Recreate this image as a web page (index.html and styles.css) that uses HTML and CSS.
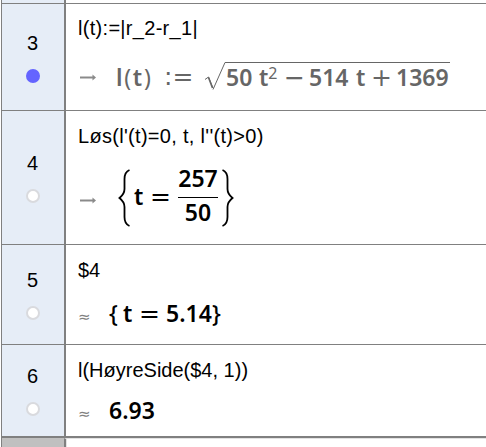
FILE: index.html
```
<!DOCTYPE html>
<html lang="no">
<head>
    <meta charset="utf-8">
    <title>CAS</title>
    <link rel="stylesheet" href="styles.css">
</head>
<body>
    <div class="cas">
        <div class="row edge">
            <div class="head"></div>
            <div class="cell"></div>
        </div>

        <div class="row row3">
            <div class="head"><span class="number">3</span><span class="dot on"></span></div>
            <div class="cell">
                <div class="input">l(t):=|r_2-r_1|</div>
                <div class="output gray">
                    <svg class="arrow" width="17" height="9" viewBox="0 0 17 9"><path d="M0 4.5H14" /><path class="tip" d="M12.5 1.5L16 4.5L12.5 7.5Z" /></svg>
                    <span class="fn">l<span class="paren">(</span>t<span class="paren">)</span></span>
                    <span class="op assign">:=</span>
                    <svg class="root" width="22" height="30" viewBox="0 0 22 30"><path class="thin" d="M1 17.5L4.5 15L9 26" /><path class="thick" d="M4.5 15.5L8.5 26" /><path class="thin" d="M9 27.5L21 .5H22" /></svg>
                    <div class="radicand">
                        <span class="num d2">50</span>
                        <span class="t">t<sup>2</sup></span>
                        <span class="op minus">−</span>
                        <span class="num d3">514</span>
                        <span class="t t-second">t</span>
                        <span class="op plus">+</span>
                        <span class="num">1369</span>
                    </div>
                </div>
            </div>
        </div>

        <div class="row row4">
            <div class="head"><span class="number">4</span><span class="dot"></span></div>
            <div class="cell">
                <div class="input">Løs(l'(t)=0, t, l''(t)&gt;0)</div>
                <div class="output">
                    <svg class="arrow" width="17" height="9" viewBox="0 0 17 9"><path d="M0 4.5H14" /><path class="tip" d="M12.5 1.5L16 4.5L12.5 7.5Z" /></svg>
                    <svg class="brace" width="13" height="58" viewBox="0 0 13 58"><path d="M11.500 1Q6.500 3 6.500 10V20Q6.500 25 1.500 29Q6.500 33 6.500 38V48Q6.500 55 11.500 57" /></svg>
                    <span class="t">t</span>
                    <span class="op equals">=</span>
                    <div class="fraction">
                        <span class="num">257</span>
                        <span class="num below">50</span>
                    </div>
                    <svg class="brace right" width="13" height="58" viewBox="0 0 13 58"><path d="M1.500 1Q6.500 3 6.500 10V20Q6.500 25 11.500 29Q6.500 33 6.500 38V48Q6.500 55 1.500 57" /></svg>
                </div>
            </div>
        </div>

        <div class="row row5">
            <div class="head"><span class="number">5</span><span class="dot"></span></div>
            <div class="cell">
                <div class="input">$4</div>
                <div class="output">
                    <span class="approx">≈</span>
                    <span class="curly">{</span>
                    <span class="t">t</span>
                    <span class="op equals">=</span>
                    <span class="num dec">5.14</span>
                    <span class="curly">}</span>
                </div>
            </div>
        </div>

        <div class="row row6">
            <div class="head"><span class="number">6</span><span class="dot"></span></div>
            <div class="cell">
                <div class="input">l(HøyreSide($4, 1))</div>
                <div class="output">
                    <span class="approx">≈</span>
                    <span class="num">6.93</span>
                </div>
            </div>
        </div>

        <div class="row footer">
            <div class="head"></div>
            <div class="cell"></div>
        </div>
    </div>
</body>
</html>
```

FILE: styles.css
```
body {
    margin: 0;
    background: #fff;
    color: #000;
    overflow: hidden;
    font-family: "Liberation Sans", Arial, sans-serif;
}
.cas {
    margin-left: 1px;
    border-left: 1px solid #808080;
    height: 447px;
    box-sizing: border-box;
}
.row {
    display: grid;
    grid-template-columns: 62px 1fr;
    box-sizing: border-box;
    border-bottom: 1px solid #808080;
}
.edge { height: 4px; }
.row3 { height: 107px; }
.row4 { height: 134px; }
.row5 { height: 100px; }
.row6 {
    height: 93px;
    border-bottom-width: 2px;
}
.footer {
    height: 9px;
    border-bottom: none;
}
.head {
    background: #e6edf7;
    display: flex;
    flex-direction: column;
    align-items: center;
    justify-content: center;
}
.number {
    font-size: 20px;
    line-height: 23px;
    margin-bottom: 14px;
    margin-right: 1px;
}
.dot {
    width: 14px;
    height: 14px;
    box-sizing: border-box;
    border: 2px solid #d9dade;
    border-radius: 50%;
    background: #fff;
}
.dot.on {
    border-color: #6464ff;
    background: #6464ff;
}
.cell {
    border-left: 2px solid #808080;
    padding-left: 12px;
}
.footer .head { background: #c0c0c0; }
.footer .cell {
    border-top: 1px solid #e3e3e3;
    box-shadow: inset 1px 0 #e3e3e3;
}
.input {
    font-size: 20px;
    line-height: 24px;
    height: 24px;
    padding-top: 13px;
    white-space: nowrap;
}
.row3 .input { letter-spacing: 0.3px; padding-top: 12px; height: 25px; }
.row4 .input { letter-spacing: 0.3px; }

/* math output */
.output {
    display: flex;
    align-items: center;
    font-family: "Noto Sans", sans-serif;
    font-size: 23px;
    font-weight: 600;
    line-height: 30px;
    white-space: nowrap;
}
.gray { color: #666; }
.output > *, .radicand > * { flex: none; }
.row3 .output { height: 30px; margin-top: 21px; }
.row4 .output { height: 60px; margin-top: 20px; }
.row5 .output { height: 30px; margin-top: 17px; }
.row6 .output { height: 30px; margin-top: 14px; }

.arrow {
    margin-left: 2px;
    fill: none;
    stroke: #8a8a8a;
    stroke-width: 2;
}
.tip {
    fill: #8a8a8a;
    stroke: none;
}
.row4 .arrow { margin-top: 5px; }
.fn {
    width: 38px;
    margin-left: 19px;
    margin-bottom: 1px;
    letter-spacing: 1.7px;
}
.num, .t { margin-bottom: 2px; }
.paren { font-weight: 400; }
.op {
    font-family: "DejaVu Sans", sans-serif;
    font-size: 25px;
    font-weight: 400;
}
.assign { width: 30px; margin-left: 10px; }
.root {
    fill: none;
    stroke: #666;
    margin-left: 10px;
}
.thin { stroke-width: 1; }
.thick { stroke-width: 1.6; }
.radicand {
    display: flex;
    align-items: center;
    box-sizing: border-box;
    width: 224px;
    height: 30px;
    border-top: 1px solid #666;
}
.t { width: 16px; }
.radicand .t { width: 25px; margin-left: 8px; }
.radicand .t-second { width: 15px; }
sup {
    font-size: 16px;
    font-weight: 400;
    line-height: 0;
    vertical-align: 7px;
}
.d2 { width: 25px; }
.minus { width: 25px; }
.d3 { width: 39px; }
.plus { width: 25px; }
.brace {
    margin-left: 21px;
    margin-right: 3px;
    fill: none;
    stroke: #000;
    stroke-width: 1.8;
}
.brace.right { margin: 0 0 0 3px; }
.equals { width: 27px; }
.row4 .t { margin-bottom: 5px; }
.row4 .equals { margin-bottom: 3px; }
.fraction {
    width: 40px;
    height: 60px;
    margin-left: 1px;
    display: flex;
    flex-direction: column;
    align-items: center;
}
.fraction .num {
    width: 40px;
    height: 29px;
    line-height: 21px;
    margin: 0;
    text-align: center;
    box-sizing: border-box;
}
.fraction .below {
    border-top: 1px solid #000;
    line-height: 28px;
}
.approx {
    width: 31px;
    margin-top: 5px;
    font-family: "DejaVu Sans", sans-serif;
    font-size: 15px;
    font-weight: 400;
    color: #808080;
}
.curly {
    width: 13px;
    font-weight: 500;
    margin-bottom: 2px;
}
.row5 .t { margin-left: 1px; }
.dec { width: 45px; }
.dec + .curly { margin-left: 1px; }
```
